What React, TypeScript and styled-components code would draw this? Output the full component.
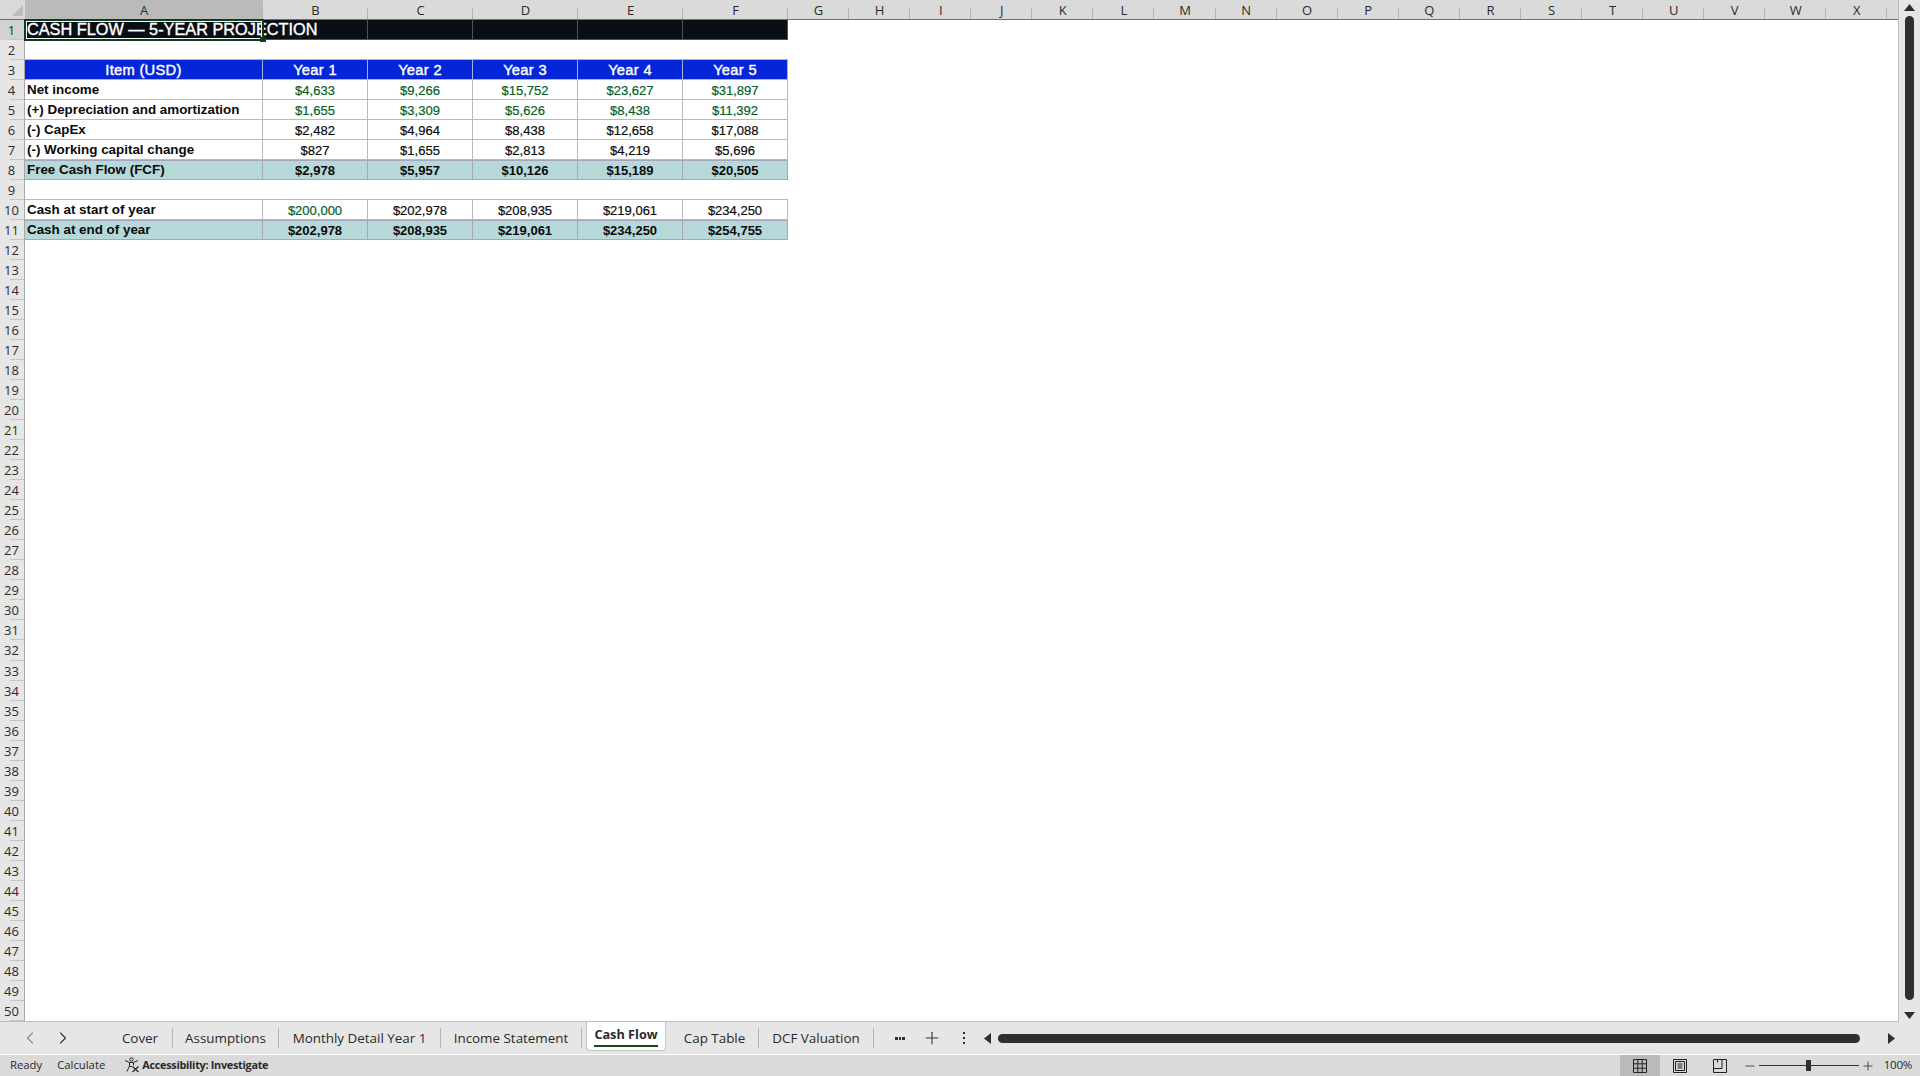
import React from "react";
import styled, { createGlobalStyle } from "styled-components";
import { ChevronLeft, ChevronRight, Plus, Minus } from "lucide-react";

const GlobalStyle = createGlobalStyle`
  html, body {
    margin: 0;
    padding: 0;
    height: 100%;
    overflow: hidden;
    background: #fff;
  }
  #root {
    height: 100%;
  }
`;

const uiFont = `"Open Sans", "Noto Sans", sans-serif`;
const cellFont = `"Liberation Sans", Arial, sans-serif`;

const Page = styled.div`
  width: 1920px;
  height: 1076px;
  display: flex;
  flex-direction: column;
  background: #e6e6e6;
  color: #222;
  font-family: ${uiFont};
`;

const Workspace = styled.div`
  height: 1022px;
  display: flex;
`;

const Sheet = styled.div`
  width: 1899px;
  flex: none;
  background: #fff;
  border-right: 1px solid #bdbdbd;
  border-bottom: 1px solid #bdbdbd;
  box-sizing: border-box;
  overflow: hidden;
`;

const ColumnBar = styled.div`
  height: 19px;
  display: flex;
  background: #dadada;
  border-bottom: 1px solid #6f6f6f;
`;

const Corner = styled.div`
  width: 25px;
  flex: none;
  display: flex;
  align-items: flex-end;
  justify-content: flex-end;
  padding: 0 2px 3px 0;
  box-sizing: border-box;
`;

const CornerMark = styled.div`
  width: 0;
  height: 0;
  border-left: 11px solid transparent;
  border-bottom: 11px solid #bdbdbd;
`;

const ColumnLabel = styled.div<{ $width: number; $active?: boolean }>`
  position: relative;
  width: ${(p) => p.$width}px;
  flex: none;
  text-align: center;
  font-size: 13px;
  line-height: 21px;
  height: 19px;
  color: ${(p) => (p.$active ? "#0d3d1f" : "#2b2b2b")};
  background: ${(p) => (p.$active ? "#bababa" : "transparent")};

  &::after {
    content: "";
    position: absolute;
    right: 0;
    bottom: 0;
    width: 1px;
    height: 11px;
    background: #b4b4b4;
  }
`;

const Row = styled.div`
  height: 20.02px;
  display: flex;
`;

const RowLabel = styled.div<{ $active?: boolean }>`
  position: relative;
  width: 25px;
  flex: none;
  box-sizing: border-box;
  border-right: 1px solid #a8a8a8;
  background: ${(p) => (p.$active ? "#d2d2d2" : "#e6e6e6")};
  color: ${(p) => (p.$active ? "#0d3d1f" : "#2b2b2b")};
  font-size: 13px;
  line-height: 21px;
  text-align: center;
  padding-right: 1px;

  &::after {
    content: "";
    position: absolute;
    right: 0;
    bottom: 0;
    width: 14px;
    height: 1px;
    background: #c4c4c4;
  }
`;

type CellKind = "title" | "head" | "plain" | "total";

const fills: Record<CellKind, string> = {
  title: "#0a0f16",
  head: "#0425d8",
  plain: "#ffffff",
  total: "#b7d8d9",
};

const lines: Record<CellKind, string> = {
  title: "#4e5157",
  head: "#a9b0dc",
  plain: "#b9b9c6",
  total: "#a5a5bc",
};

const Cell = styled.div<{
  $kind: CellKind;
  $width: number;
  $first?: boolean;
  $green?: boolean;
  $strong?: boolean;
  $ruled?: boolean;
}>`
  width: ${(p) => p.$width}px;
  height: 20px;
  flex: none;
  box-sizing: border-box;
  background: ${(p) => fills[p.$kind]};
  border-right: 1px solid ${(p) => lines[p.$kind]};
  border-bottom: 1px solid ${(p) => lines[p.$kind]};
  box-shadow: ${(p) =>
    p.$ruled ? `0 -1px 0 ${lines[p.$kind]}` : p.$kind === "total" ? `inset 0 1px 0 ${lines.total}` : "none"};
  font-family: ${cellFont};
  font-size: ${(p) => (p.$kind === "head" ? "14.7px" : p.$first ? "13.4px" : "13px")};
  font-weight: ${(p) => (p.$kind !== "head" && (p.$strong || p.$first) ? 700 : 400)};
  letter-spacing: ${(p) => (p.$kind === "head" ? "0.3px" : "0")};
  -webkit-text-stroke: ${(p) => (p.$kind === "head" ? "0.4px #fff" : p.$first || p.$strong ? "0" : "0.2px")};
  line-height: ${(p) => (p.$first && p.$kind !== "head" ? "19px" : "21px")};
  white-space: nowrap;
  text-align: ${(p) => (p.$first && p.$kind !== "head" ? "left" : "center")};
  padding-left: ${(p) => (p.$first && p.$kind !== "head" ? "2px" : "0")};
  color: ${(p) => (p.$kind === "head" ? "#fff" : p.$green ? "#06601f" : "#0a0a0a")};
`;

const TitleCell = styled.div`
  position: relative;
  z-index: 1;
  width: 238px;
  flex: none;
  box-sizing: border-box;
  background: #0a0f16;
  padding-left: 2px;
  font-family: ${cellFont};
  font-size: 16.3px;
  -webkit-text-stroke: 0.35px #fff;
  line-height: 19px;
  white-space: nowrap;
  color: #fff;

  &::before {
    content: "";
    position: absolute;
    left: -1px;
    top: -1px;
    right: -1px;
    bottom: -1px;
    border: 2px solid #0d3d1f;
  }

  &::after {
    content: "";
    position: absolute;
    left: 1px;
    top: 1px;
    right: 1px;
    bottom: 1px;
    border: 1px solid #fff;
  }
`;

const FillHandle = styled.span`
  position: absolute;
  z-index: 2;
  right: -3px;
  bottom: -2px;
  width: 6px;
  height: 5px;
  background: #0d3d1f;
`;

const VScroll = styled.div`
  flex: 1;
  display: flex;
  flex-direction: column;
  align-items: center;
  padding: 4px 0 3px;
  box-sizing: border-box;
`;

const VThumb = styled.div`
  width: 9px;
  flex: 1;
  margin: 5px 0 12px;
  border-radius: 5px;
  background: #2f2f2f;
`;

const Triangle = styled.svg`
  display: block;
  flex: none;
  fill: #2f2f2f;
`;

const TabBar = styled.div`
  height: 32px;
  display: flex;
  align-items: center;
  background: #e6e6e6;
  border-bottom: 1px solid #fff;
`;

const NavArrows = styled.div`
  width: 108px;
  flex: none;
  display: flex;
  gap: 13px;
  padding-left: 20px;
  box-sizing: border-box;
`;

const NavArrow = styled.span<{ $dim?: boolean }>`
  display: flex;
  color: ${(p) => (p.$dim ? "#8b8b8b" : "#333")};
`;

const Tabs = styled.div`
  display: flex;
  align-items: center;
  height: 32px;
`;

const Tab = styled.div<{ $active?: boolean; $width: number }>`
  position: relative;
  width: ${(p) => p.$width}px;
  flex: none;
  height: ${(p) => (p.$active ? "29px" : "20px")};
  align-self: ${(p) => (p.$active ? "flex-start" : "center")};
  display: flex;
  align-items: center;
  justify-content: center;
  box-sizing: border-box;
  font-size: 13.4px;
  line-height: 20px;
  padding-bottom: 1px;
  color: #2a2a2a;
  border-right: ${(p) => (p.$active ? "none" : "1px solid #b5b5b5")};
  ${(p) =>
    p.$active
      ? `
    background: #fff;
    font-size: 12.7px;
    font-weight: 700;
    border: 1px solid #c4c4c4;
    border-top: none;
    border-radius: 0 0 4px 4px;
    padding-bottom: 4px;
    margin: 0 5px 0 4px;
    &::after {
      content: "";
      position: absolute;
      left: 7px;
      right: 7px;
      bottom: 3px;
      height: 2px;
      background: #0d4a20;
    }
  `
      : ""}
`;

const TabTools = styled.div`
  width: 110px;
  flex: none;
  display: flex;
  align-items: center;
  gap: 17px;
  padding-left: 21px;
  box-sizing: border-box;
  color: #333;
`;

const Dots = styled.span<{ $vertical?: boolean }>`
  display: flex;
  flex-direction: ${(p) => (p.$vertical ? "column" : "row")};
  gap: ${(p) => (p.$vertical ? "3px" : "1px")};
  width: 10px;
  align-items: center;
  justify-content: center;

  i {
    display: block;
    width: ${(p) => (p.$vertical ? "2px" : "3px")};
    height: ${(p) => (p.$vertical ? "2px" : "3px")};
    background: #2f2f2f;
  }
`;

const HScroll = styled.div`
  flex: 1;
  display: flex;
  align-items: center;
`;

const HThumb = styled.div`
  width: 862px;
  height: 9px;
  margin: 0 28px 0 7px;
  border-radius: 5px;
  background: #2f2f2f;
`;

const StatusBar = styled.div`
  flex: 1;
  display: flex;
  align-items: center;
  justify-content: space-between;
  background: #dadada;
`;

const StatusLeft = styled.div`
  display: flex;
  align-items: center;
  padding: 0 0 2px 10px;
  font-size: 11.3px;
  color: #2a2a2a;
`;

const StatusItem = styled.span<{ $gap: number }>`
  margin-right: ${(p) => p.$gap}px;
`;

const AccessText = styled.span`
  margin-left: 2px;
  font-weight: 700;
  font-size: 10.9px;
  letter-spacing: -0.3px;
`;

const StatusRight = styled.div`
  height: 100%;
  display: flex;
  align-items: center;
`;

const ViewButton = styled.div<{ $active?: boolean }>`
  width: 40px;
  height: 100%;
  display: flex;
  align-items: center;
  justify-content: center;
  background: ${(p) => (p.$active ? "#bababa" : "transparent")};
`;

const Zoomer = styled.div`
  display: flex;
  align-items: center;
  margin-left: 3px;
  color: #333;
`;

const SliderTrack = styled.div`
  position: relative;
  width: 100px;
  height: 1px;
  margin: 0 2px;
  background: #333;
`;

const SliderThumb = styled.span`
  position: absolute;
  left: 47px;
  top: -5px;
  width: 5px;
  height: 11px;
  background: #2f2f2f;
`;

const ZoomValue = styled.span`
  width: 45px;
  padding: 0 8px 2px 0;
  box-sizing: border-box;
  text-align: right;
  font-size: 11.6px;
  letter-spacing: -0.3px;
  color: #2a2a2a;
`;

const firstWidth = 238;
const yearWidth = 105;
const plainWidth = 61.08;
const rightColumns = "GHIJKLMNOPQRSTUVWX".split("");

type RowData = {
  label: string;
  values: string[];
  kind: CellKind;
  green?: boolean;
  greenFirst?: boolean;
  ruled?: boolean;
};

const rowsByNumber: Record<number, RowData> = {
  3: { label: "Item (USD)", values: ["Year 1", "Year 2", "Year 3", "Year 4", "Year 5"], kind: "head", ruled: true },
  4: { label: "Net income", values: ["$4,633", "$9,266", "$15,752", "$23,627", "$31,897"], kind: "plain", green: true },
  5: { label: "(+) Depreciation and amortization", values: ["$1,655", "$3,309", "$5,626", "$8,438", "$11,392"], kind: "plain", green: true },
  6: { label: "(-) CapEx", values: ["$2,482", "$4,964", "$8,438", "$12,658", "$17,088"], kind: "plain" },
  7: { label: "(-) Working capital change", values: ["$827", "$1,655", "$2,813", "$4,219", "$5,696"], kind: "plain" },
  8: { label: "Free Cash Flow (FCF)", values: ["$2,978", "$5,957", "$10,126", "$15,189", "$20,505"], kind: "total" },
  10: { label: "Cash at start of year", values: ["$200,000", "$202,978", "$208,935", "$219,061", "$234,250"], kind: "plain", greenFirst: true, ruled: true },
  11: { label: "Cash at end of year", values: ["$202,978", "$208,935", "$219,061", "$234,250", "$254,755"], kind: "total" },
};

const tabs = [
  { name: "Cover", width: 65 },
  { name: "Assumptions", width: 106 },
  { name: "Monthly Detail Year 1", width: 162 },
  { name: "Income Statement", width: 141 },
  { name: "Cash Flow", width: 80, active: true },
  { name: "Cap Table", width: 88 },
  { name: "DCF Valuation", width: 115 },
];

function AccessibilityIcon() {
  return (
    <svg width="16" height="16" viewBox="0 0 16 16" fill="none" stroke="#2a2a2a" strokeWidth="1">
      <circle cx="7.5" cy="2.5" r="1.7" />
      <path d="M1 3.5 L5.5 5.5 H9.5 L14 3.5 M5.5 5.5 L5.5 9 L3 14.5 M9.5 5.5 L9.5 8.5 M5.5 9.5 H8" />
      <path d="M8.5 9.5 L14.5 15 M14.5 9.5 L8.5 15" strokeWidth="1.3" />
    </svg>
  );
}

function GridViewIcon() {
  return (
    <svg width="14" height="14" viewBox="0 0 14 14" fill="none" stroke="#222" strokeWidth="1">
      <path d="M.5.5h13v13H.5z M.5 4.8h13 M.5 9.2h13 M4.8.5v13 M9.2.5v13" />
    </svg>
  );
}

function PageViewIcon() {
  return (
    <svg width="14" height="14" viewBox="0 0 14 14" fill="none" stroke="#222" strokeWidth="1">
      <path d="M.5.5h13v13H.5z M2.5 2.5h9v9h-9z M4.5 5h5 M4.5 7h5 M4.5 9h5" />
    </svg>
  );
}

function BreakViewIcon() {
  return (
    <svg width="14" height="14" viewBox="0 0 14 14" fill="none" stroke="#222" strokeWidth="1">
      <path d="M.5.5h13v13H.5z M.5 9.5h8.5V.5 M4.5.5v3" />
    </svg>
  );
}

export default function App() {
  const rows = Array.from({ length: 50 }, (_, i) => i + 1);

  return (
    <Page>
      <GlobalStyle />
      <Workspace>
        <Sheet>
          <ColumnBar>
            <Corner>
              <CornerMark />
            </Corner>
            <ColumnLabel $width={firstWidth} $active>
              A
            </ColumnLabel>
            {"BCDEF".split("").map((c) => (
              <ColumnLabel key={c} $width={yearWidth}>
                {c}
              </ColumnLabel>
            ))}
            {rightColumns.map((c) => (
              <ColumnLabel key={c} $width={plainWidth}>
                {c}
              </ColumnLabel>
            ))}
          </ColumnBar>

          {rows.map((n) => {
            const data = rowsByNumber[n];
            return (
              <Row key={n}>
                <RowLabel $active={n === 1}>{n}</RowLabel>
                {n === 1 && (
                  <>
                    <TitleCell>
                      CASH FLOW — 5-YEAR PROJECTION
                      <FillHandle />
                    </TitleCell>
                    {[0, 1, 2, 3, 4].map((i) => (
                      <Cell key={i} $kind="title" $width={yearWidth} />
                    ))}
                  </>
                )}
                {data && (
                  <>
                    <Cell $kind={data.kind} $width={firstWidth} $first $ruled={data.ruled}>
                      {data.label}
                    </Cell>
                    {data.values.map((v, i) => (
                      <Cell
                        key={i}
                        $kind={data.kind}
                        $width={yearWidth}
                        $ruled={data.ruled}
                        $strong={data.kind === "total"}
                        $green={data.green || (data.greenFirst && i === 0)}
                      >
                        {v}
                      </Cell>
                    ))}
                  </>
                )}
              </Row>
            );
          })}
        </Sheet>

        <VScroll>
          <Triangle width="11" height="7" viewBox="0 0 11 7">
            <path d="M5.5 0 L11 7 H0 Z" />
          </Triangle>
          <VThumb />
          <Triangle width="11" height="7" viewBox="0 0 11 7">
            <path d="M0 0 H11 L5.5 7 Z" />
          </Triangle>
        </VScroll>
      </Workspace>

      <TabBar>
        <NavArrows>
          <NavArrow $dim>
            <ChevronLeft size={20} strokeWidth={1.3} />
          </NavArrow>
          <NavArrow>
            <ChevronRight size={20} strokeWidth={1.3} />
          </NavArrow>
        </NavArrows>
        <Tabs>
          {tabs.map((t) => (
            <Tab key={t.name} $active={t.active} $width={t.width}>
              {t.name}
            </Tab>
          ))}
        </Tabs>
        <TabTools>
          <Dots>
            <i />
            <i />
            <i />
          </Dots>
          <Plus size={20} strokeWidth={1.3} />
          <Dots $vertical>
            <i />
            <i />
            <i />
          </Dots>
        </TabTools>
        <HScroll>
          <Triangle width="7" height="11" viewBox="0 0 7 11">
            <path d="M7 0 V11 L0 5.5 Z" />
          </Triangle>
          <HThumb />
          <Triangle width="7" height="11" viewBox="0 0 7 11">
            <path d="M0 0 L7 5.5 L0 11 Z" />
          </Triangle>
        </HScroll>
      </TabBar>

      <StatusBar>
        <StatusLeft>
          <StatusItem $gap={15}>Ready</StatusItem>
          <StatusItem $gap={19}>Calculate</StatusItem>
          <AccessibilityIcon />
          <AccessText>Accessibility: Investigate</AccessText>
        </StatusLeft>
        <StatusRight>
          <ViewButton $active>
            <GridViewIcon />
          </ViewButton>
          <ViewButton>
            <PageViewIcon />
          </ViewButton>
          <ViewButton>
            <BreakViewIcon />
          </ViewButton>
          <Zoomer>
            <Minus size={14} strokeWidth={1.4} />
            <SliderTrack>
              <SliderThumb />
            </SliderTrack>
            <Plus size={14} strokeWidth={1.4} />
          </Zoomer>
          <ZoomValue>100%</ZoomValue>
        </StatusRight>
      </StatusBar>
    </Page>
  );
}
